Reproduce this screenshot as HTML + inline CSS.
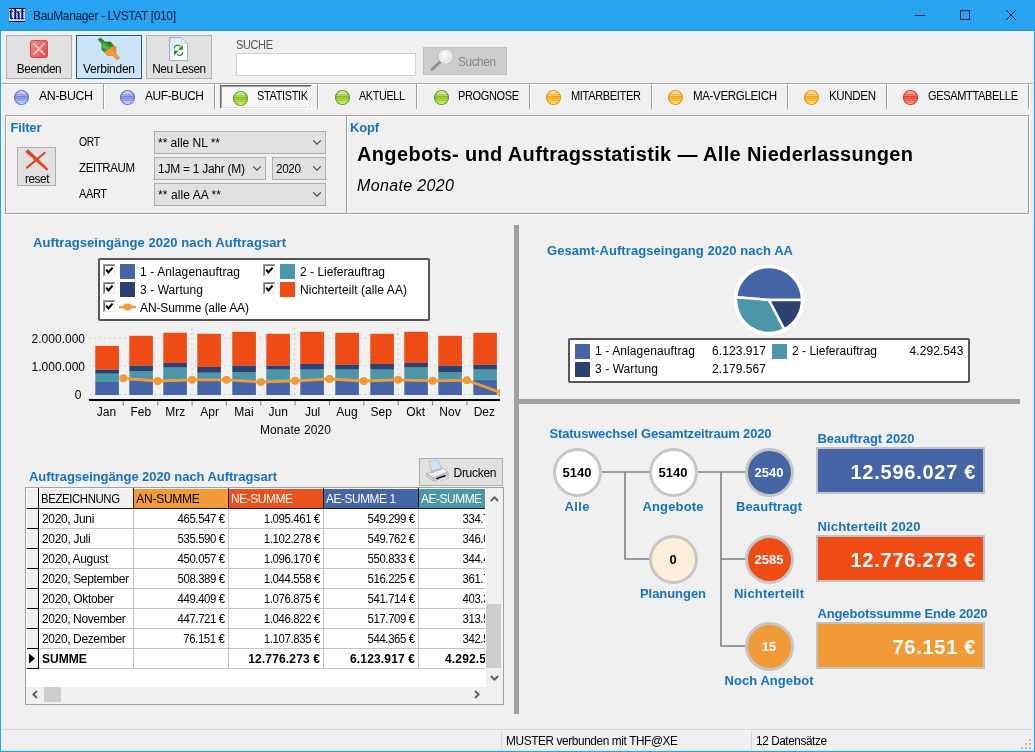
<!DOCTYPE html>
<html lang="de"><head><meta charset="utf-8"><title>BauManager - LVSTAT [010]</title>
<style>
html,body{margin:0;padding:0}
body{width:1035px;height:752px;overflow:hidden;background:#f0f0f0;position:relative;font-family:"Liberation Sans",sans-serif;font-size:12px;color:#000}
body div,body svg,body span.t{position:absolute}
span.t{white-space:nowrap;line-height:1.117}
</style></head><body>
<div id="win" style="left:0;top:0;width:1035px;height:752px;will-change:transform">
<div style="left:0px;top:0px;width:1035px;height:31px;background:#27a3f1"></div><div style="left:0px;top:30px;width:1035px;height:1px;background:#3a8fc6"></div><div style="left:0px;top:31px;width:1035px;height:1px;background:#dcfbff"></div><div style="left:0px;top:32px;width:1035px;height:1px;background:#eaf4fa"></div><div style="left:9px;top:8px;width:16px;height:14px;background:repeating-conic-gradient(#fff 0 25%,#8ed0f8 0 50%) 0 0/2px 2px;border-top:1px solid #000;border-bottom:1px solid #000;box-sizing:border-box;overflow:hidden"><span style="position:absolute;left:0.2px;top:-1.6px;font:bold 17px/14px 'Liberation Serif',serif;color:#08088c;-webkit-text-stroke:0.25px #08088c;letter-spacing:0.6px;transform:scaleX(0.71);transform-origin:0 0">thf</span></div><svg style="left:905px;top:0" width="130" height="31" viewBox="0 0 130 31"><g stroke="#0a1a4a" stroke-width="1" fill="none"><path d="M10 15.5H20"/><rect x="55.5" y="10.5" width="9" height="9"/><path d="M101 10L111 20M111 10L101 20"/></g></svg><div style="left:6px;top:35px;width:66px;height:44px;background:#e1e1e1;border:1px solid #adadad;box-sizing:border-box"></div><div style="left:76px;top:35px;width:66px;height:44px;background:#cce4f7;border:1px solid #1b5a8c;box-sizing:border-box"></div><div style="left:146px;top:35px;width:66px;height:44px;background:#e1e1e1;border:1px solid #adadad;box-sizing:border-box"></div><svg style="left:29px;top:39px" width="20" height="20" viewBox="0 0 20 20"><defs><linearGradient id="rg" x1="0" y1="0" x2="1" y2="1"><stop offset="0" stop-color="#f38c8c"/><stop offset="0.55" stop-color="#ee6666"/><stop offset="1" stop-color="#e44646"/></linearGradient></defs><rect x="0.6" y="0.6" width="18.8" height="18.8" rx="2.6" fill="#fbd0d0"/><rect x="1.5" y="1.5" width="17" height="17" rx="2" fill="url(#rg)" stroke="#c84444" stroke-width="0.9"/><path d="M4.8 4.8L15.2 15.2M15.2 4.8L4.8 15.2" stroke="#ffe9e9" stroke-opacity="0.9" stroke-width="1.5" stroke-linecap="round"/></svg><svg style="left:97px;top:37px" width="26" height="26" viewBox="0 0 26 26"><defs><linearGradient id="gg" x1="0.2" y1="0.9" x2="0.8" y2="0.1"><stop offset="0" stop-color="#1d6f1d"/><stop offset="0.35" stop-color="#58c24e"/><stop offset="0.6" stop-color="#2a8f2a"/><stop offset="1" stop-color="#176a17"/></linearGradient><linearGradient id="og" x1="0.2" y1="0.9" x2="0.8" y2="0.1"><stop offset="0" stop-color="#ef8a2a"/><stop offset="0.5" stop-color="#f9a140"/><stop offset="1" stop-color="#dd7a1c"/></linearGradient></defs><path d="M1.1 2.6L3.5 1L7.9 5H13.6L16.7 8.7L7.5 14.9L5.1 13.1L4.8 6.7Z" fill="url(#gg)" stroke="#166016" stroke-width="0.6" stroke-linejoin="round"/><path d="M16.7 8.7L18.9 10V17L22.8 21L19.75 22.75L15.8 18.6L10.5 18.4L7.5 14.9Z" fill="url(#og)" stroke="#d8741a" stroke-width="0.6" stroke-linejoin="round"/></svg><svg style="left:169px;top:37px" width="20" height="25" viewBox="0 0 20 25"><defs><linearGradient id="pg" x1="0" y1="0" x2="0.7" y2="0.6"><stop offset="0" stop-color="#cfe0f5"/><stop offset="1" stop-color="#ffffff"/></linearGradient></defs><path d="M0.5 0.5H12.5L18.5 6.3V23.5H0.5Z" fill="url(#pg)" stroke="#9aa0b6" stroke-width="0.85"/><path d="M12.5 0.5V6.3H18.5Z" fill="#eef3fa" stroke="#b4bacb" stroke-width="0.7"/><g fill="#168816"><path d="M13.8 7.9V12.7H9.2Z"/><path d="M5 13.8V18.6L9.6 13.8Z"/></g><g fill="none" stroke="#168816" stroke-width="1.2"><path d="M5.4 11.6C5.4 8 9.5 6.9 11.2 9.6"/><path d="M13.7 15C13.7 18.6 9.8 19.6 8 17"/></g></svg><div style="left:236px;top:53px;width:180px;height:23px;background:#fff;border:1px solid #d0d0d0;box-sizing:border-box"></div><div style="left:423px;top:47px;width:84px;height:28px;background:#cccccc;border:1px solid #bfbfbf;box-sizing:border-box"></div><svg style="left:428px;top:47px" width="28" height="27" viewBox="0 0 28 27"><defs><radialGradient id="mg" cx="0.4" cy="0.35" r="0.7"><stop offset="0" stop-color="#ffffff"/><stop offset="1" stop-color="#dcdcdc"/></radialGradient></defs><path d="M12.5 14.5L4 22.5" stroke="#8d8d8d" stroke-width="2.6" stroke-linecap="round"/><circle cx="17.7" cy="9.6" r="6.6" fill="url(#mg)" stroke="#ececec" stroke-width="1.6"/><circle cx="17.7" cy="9.6" r="7.5" fill="none" stroke="#b2b2b2" stroke-width="0.6"/></svg><div style="left:1px;top:83px;width:1033px;height:1px;background:#a5a5a5"></div><div style="left:1px;top:84px;width:1033px;height:1px;background:#fff"></div><div style="left:220px;top:85px;width:92px;height:24px;box-sizing:border-box;background:repeating-conic-gradient(#fff 0 25%,#f0f0f0 0 50%) 0 0/2px 2px;border-top:1px solid #696969;border-left:1px solid #696969;border-right:1px solid #fff;border-bottom:1px solid #fff"><div style="left:0;top:0;right:0;bottom:0;border-top:1px solid #a0a0a0;border-left:1px solid #a0a0a0;border-right:1px solid #e3e3e3;border-bottom:1px solid #e3e3e3"></div></div><div style="left:103px;top:84px;width:1px;height:25px;background:#a0a0a0"></div><div style="left:104px;top:85px;width:1px;height:24px;background:#fff"></div><div style="left:214px;top:84px;width:1px;height:25px;background:#a0a0a0"></div><div style="left:215px;top:85px;width:1px;height:24px;background:#fff"></div><div style="left:317px;top:84px;width:1px;height:25px;background:#a0a0a0"></div><div style="left:318px;top:85px;width:1px;height:24px;background:#fff"></div><div style="left:416px;top:84px;width:1px;height:25px;background:#a0a0a0"></div><div style="left:417px;top:85px;width:1px;height:24px;background:#fff"></div><div style="left:529px;top:84px;width:1px;height:25px;background:#a0a0a0"></div><div style="left:530px;top:85px;width:1px;height:24px;background:#fff"></div><div style="left:651px;top:84px;width:1px;height:25px;background:#a0a0a0"></div><div style="left:652px;top:85px;width:1px;height:24px;background:#fff"></div><div style="left:787px;top:84px;width:1px;height:25px;background:#a0a0a0"></div><div style="left:788px;top:85px;width:1px;height:24px;background:#fff"></div><div style="left:886px;top:84px;width:1px;height:25px;background:#a0a0a0"></div><div style="left:887px;top:85px;width:1px;height:24px;background:#fff"></div><div style="left:1028px;top:84px;width:1px;height:25px;background:#a0a0a0"></div><div style="left:1029px;top:85px;width:1px;height:24px;background:#fff"></div><svg width="0" height="0" style="left:0;top:0"><defs><linearGradient id="lb" x1="0" y1="0" x2="0" y2="1"><stop offset="0.08" stop-color="#dcd6fb"/><stop offset="0.45" stop-color="#7686e4"/><stop offset="0.7" stop-color="#8ea4f0"/><stop offset="0.97" stop-color="#c8f3ff"/></linearGradient><linearGradient id="lg" x1="0" y1="0" x2="0" y2="1"><stop offset="0.08" stop-color="#e2f2c0"/><stop offset="0.45" stop-color="#86c416"/><stop offset="0.7" stop-color="#a4da28"/><stop offset="0.97" stop-color="#e6fb80"/></linearGradient><linearGradient id="ly" x1="0" y1="0" x2="0" y2="1"><stop offset="0.08" stop-color="#ffe9a8"/><stop offset="0.45" stop-color="#fba616"/><stop offset="0.7" stop-color="#ffc02a"/><stop offset="0.97" stop-color="#fff27a"/></linearGradient><linearGradient id="lr" x1="0" y1="0" x2="0" y2="1"><stop offset="0.08" stop-color="#ffc0b0"/><stop offset="0.45" stop-color="#f03e2c"/><stop offset="0.7" stop-color="#fb5e48"/><stop offset="0.97" stop-color="#ffa88c"/></linearGradient><pattern id="stp" width="2" height="2" patternUnits="userSpaceOnUse"><rect width="2" height="1" fill="#fff" fill-opacity="0.16"/><rect y="1" width="2" height="1" fill="#000" fill-opacity="0.05"/></pattern></defs></svg><svg style="left:13px;top:88.5px" width="17" height="17" viewBox="0 0 17 17"><circle cx="8.5" cy="8.5" r="7" fill="url(#lb)" stroke="#5f6ed0" stroke-width="1.1"/><circle cx="8.5" cy="8.5" r="6.4" fill="url(#stp)"/></svg><svg style="left:119px;top:88.5px" width="17" height="17" viewBox="0 0 17 17"><circle cx="8.5" cy="8.5" r="7" fill="url(#lb)" stroke="#5f6ed0" stroke-width="1.1"/><circle cx="8.5" cy="8.5" r="6.4" fill="url(#stp)"/></svg><svg style="left:231.5px;top:89.5px" width="17" height="17" viewBox="0 0 17 17"><circle cx="8.5" cy="8.5" r="7" fill="url(#lg)" stroke="#5d9c1a" stroke-width="1.1"/><circle cx="8.5" cy="8.5" r="6.4" fill="url(#stp)"/></svg><svg style="left:334px;top:88.5px" width="17" height="17" viewBox="0 0 17 17"><circle cx="8.5" cy="8.5" r="7" fill="url(#lg)" stroke="#5d9c1a" stroke-width="1.1"/><circle cx="8.5" cy="8.5" r="6.4" fill="url(#stp)"/></svg><svg style="left:433px;top:88.5px" width="17" height="17" viewBox="0 0 17 17"><circle cx="8.5" cy="8.5" r="7" fill="url(#lg)" stroke="#5d9c1a" stroke-width="1.1"/><circle cx="8.5" cy="8.5" r="6.4" fill="url(#stp)"/></svg><svg style="left:545px;top:88.5px" width="17" height="17" viewBox="0 0 17 17"><circle cx="8.5" cy="8.5" r="7" fill="url(#ly)" stroke="#e89010" stroke-width="1.1"/><circle cx="8.5" cy="8.5" r="6.4" fill="url(#stp)"/></svg><svg style="left:667px;top:88.5px" width="17" height="17" viewBox="0 0 17 17"><circle cx="8.5" cy="8.5" r="7" fill="url(#ly)" stroke="#e89010" stroke-width="1.1"/><circle cx="8.5" cy="8.5" r="6.4" fill="url(#stp)"/></svg><svg style="left:803px;top:88.5px" width="17" height="17" viewBox="0 0 17 17"><circle cx="8.5" cy="8.5" r="7" fill="url(#ly)" stroke="#e89010" stroke-width="1.1"/><circle cx="8.5" cy="8.5" r="6.4" fill="url(#stp)"/></svg><svg style="left:902px;top:88.5px" width="17" height="17" viewBox="0 0 17 17"><circle cx="8.5" cy="8.5" r="7" fill="url(#lr)" stroke="#d03024" stroke-width="1.1"/><circle cx="8.5" cy="8.5" r="6.4" fill="url(#stp)"/></svg><div style="left:5px;top:115px;width:1024px;height:99px;box-sizing:border-box;border:1px solid #a0a0a0;box-shadow:1px 1px 0 #fff, inset 1px 1px 0 #fff"></div><div style="left:346px;top:116px;width:1px;height:97px;background:#a0a0a0"></div><div style="left:347px;top:116px;width:1px;height:97px;background:#fff"></div><div style="left:17px;top:147px;width:39px;height:39px;background:#e1e1e1;border:1px solid #adadad;box-sizing:border-box"></div><svg style="left:25px;top:149px" width="25" height="23" viewBox="0 0 25 23"><path d="M1 2.8L3 0.8L22.7 20.1L21.9 21Z" fill="#e2471b" stroke="#e2471b" stroke-width="1.1" stroke-linejoin="round"/><path d="M2 18.6L19.8 3.8" stroke="#e2471b" stroke-width="2.1" stroke-linecap="round"/></svg><div style="left:154px;top:131px;width:172px;height:23px;background:#e1e1e1;border:1px solid #adadad;box-sizing:border-box"></div><svg style="left:312px;top:139px" width="10" height="7" viewBox="0 0 10 7"><path d="M1.2 1.4L5 5.2L8.8 1.4" fill="none" stroke="#444" stroke-width="1.1"/></svg><div style="left:154px;top:157px;width:112px;height:23px;background:#e1e1e1;border:1px solid #adadad;box-sizing:border-box"></div><svg style="left:252px;top:165px" width="10" height="7" viewBox="0 0 10 7"><path d="M1.2 1.4L5 5.2L8.8 1.4" fill="none" stroke="#444" stroke-width="1.1"/></svg><div style="left:272px;top:157px;width:54px;height:23px;background:#e1e1e1;border:1px solid #adadad;box-sizing:border-box"></div><svg style="left:312px;top:165px" width="10" height="7" viewBox="0 0 10 7"><path d="M1.2 1.4L5 5.2L8.8 1.4" fill="none" stroke="#444" stroke-width="1.1"/></svg><div style="left:154px;top:183px;width:172px;height:23px;background:#e1e1e1;border:1px solid #adadad;box-sizing:border-box"></div><svg style="left:312px;top:191px" width="10" height="7" viewBox="0 0 10 7"><path d="M1.2 1.4L5 5.2L8.8 1.4" fill="none" stroke="#444" stroke-width="1.1"/></svg><div style="left:514px;top:225px;width:5px;height:489px;background:#a0a0a0"></div><div style="left:519px;top:399px;width:501px;height:5px;background:#a0a0a0"></div><div style="left:98px;top:258px;width:332px;height:63px;background:#fff;border:2px solid #555;border-radius:2px;box-sizing:border-box"></div><svg style="left:103px;top:264px" width="12" height="12" viewBox="0 0 12 12"><rect x="0" y="0" width="12" height="12" fill="#fff"/><path d="M0.5 12V0.5H12" fill="none" stroke="#9a9a9a"/><path d="M1.5 11V1.5H11" fill="none" stroke="#6e6e6e"/><path d="M11.5 1V11.5H1" fill="none" stroke="#e6e6e6"/><path d="M3.2 5.7L5.4 8.4L9.6 3.6" fill="none" stroke="#000" stroke-width="2.1"/></svg><div style="left:120px;top:264px;width:15px;height:15px;background:#4565a6"></div><svg style="left:263px;top:264px" width="12" height="12" viewBox="0 0 12 12"><rect x="0" y="0" width="12" height="12" fill="#fff"/><path d="M0.5 12V0.5H12" fill="none" stroke="#9a9a9a"/><path d="M1.5 11V1.5H11" fill="none" stroke="#6e6e6e"/><path d="M11.5 1V11.5H1" fill="none" stroke="#e6e6e6"/><path d="M3.2 5.7L5.4 8.4L9.6 3.6" fill="none" stroke="#000" stroke-width="2.1"/></svg><div style="left:280px;top:264px;width:15px;height:15px;background:#4b97a9"></div><svg style="left:103px;top:282px" width="12" height="12" viewBox="0 0 12 12"><rect x="0" y="0" width="12" height="12" fill="#fff"/><path d="M0.5 12V0.5H12" fill="none" stroke="#9a9a9a"/><path d="M1.5 11V1.5H11" fill="none" stroke="#6e6e6e"/><path d="M11.5 1V11.5H1" fill="none" stroke="#e6e6e6"/><path d="M3.2 5.7L5.4 8.4L9.6 3.6" fill="none" stroke="#000" stroke-width="2.1"/></svg><div style="left:120px;top:282px;width:15px;height:15px;background:#2c4172"></div><svg style="left:263px;top:282px" width="12" height="12" viewBox="0 0 12 12"><rect x="0" y="0" width="12" height="12" fill="#fff"/><path d="M0.5 12V0.5H12" fill="none" stroke="#9a9a9a"/><path d="M1.5 11V1.5H11" fill="none" stroke="#6e6e6e"/><path d="M11.5 1V11.5H1" fill="none" stroke="#e6e6e6"/><path d="M3.2 5.7L5.4 8.4L9.6 3.6" fill="none" stroke="#000" stroke-width="2.1"/></svg><div style="left:280px;top:282px;width:15px;height:15px;background:#ef4b15"></div><svg style="left:103px;top:300px" width="12" height="12" viewBox="0 0 12 12"><rect x="0" y="0" width="12" height="12" fill="#fff"/><path d="M0.5 12V0.5H12" fill="none" stroke="#9a9a9a"/><path d="M1.5 11V1.5H11" fill="none" stroke="#6e6e6e"/><path d="M11.5 1V11.5H1" fill="none" stroke="#e6e6e6"/><path d="M3.2 5.7L5.4 8.4L9.6 3.6" fill="none" stroke="#000" stroke-width="2.1"/></svg><svg style="left:118px;top:302px" width="20" height="10" viewBox="0 0 20 10"><path d="M1 5H18" stroke="#f19b38" stroke-width="2.5"/><ellipse cx="9.5" cy="5" rx="4.2" ry="3.4" fill="#f19b38"/></svg><svg style="left:0;top:320px" width="520" height="125" viewBox="0 320 520 125"><path d="M89 338H500" stroke="#d2d2d2" stroke-width="1.2" stroke-dasharray="2 3"/><path d="M89 366H500" stroke="#d2d2d2" stroke-width="1.2" stroke-dasharray="2 3"/><path d="M89 394.5H500" stroke="#d2d2d2" stroke-width="1.2" stroke-dasharray="2 3"/><path d="M192 328V399" stroke="#d2d2d2" stroke-width="1.2" stroke-dasharray="2 3"/><path d="M294.5 328V399" stroke="#d2d2d2" stroke-width="1.2" stroke-dasharray="2 3"/><path d="M398 328V399" stroke="#d2d2d2" stroke-width="1.2" stroke-dasharray="2 3"/><rect x="95.3" y="345.9" width="23.6" height="23.8" fill="#ef4b15"/><rect x="95.3" y="369.7" width="23.6" height="4.1" fill="#2c4172"/><rect x="95.3" y="373.8" width="23.6" height="8.2" fill="#4b97a9"/><rect x="95.3" y="382" width="23.6" height="13.0" fill="#4565a6"/><rect x="129.3" y="335.8" width="23.6" height="29.9" fill="#ef4b15"/><rect x="129.3" y="365.7" width="23.6" height="5.3" fill="#2c4172"/><rect x="129.3" y="371" width="23.6" height="10.0" fill="#4b97a9"/><rect x="129.3" y="381" width="23.6" height="14.0" fill="#4565a6"/><rect x="163.3" y="332.8" width="23.6" height="30.2" fill="#ef4b15"/><rect x="163.3" y="363" width="23.6" height="4.7" fill="#2c4172"/><rect x="163.3" y="367.7" width="23.6" height="12.8" fill="#4b97a9"/><rect x="163.3" y="380.5" width="23.6" height="14.5" fill="#4565a6"/><rect x="197.3" y="333.8" width="23.6" height="33.2" fill="#ef4b15"/><rect x="197.3" y="367" width="23.6" height="5.8" fill="#2c4172"/><rect x="197.3" y="372.8" width="23.6" height="8.2" fill="#4b97a9"/><rect x="197.3" y="381" width="23.6" height="14.0" fill="#4565a6"/><rect x="232.3" y="331.8" width="23.6" height="33.9" fill="#ef4b15"/><rect x="232.3" y="365.7" width="23.6" height="6.3" fill="#2c4172"/><rect x="232.3" y="372" width="23.6" height="8.0" fill="#4b97a9"/><rect x="232.3" y="380" width="23.6" height="15.0" fill="#4565a6"/><rect x="266.3" y="333.8" width="23.6" height="31.9" fill="#ef4b15"/><rect x="266.3" y="365.7" width="23.6" height="4.0" fill="#2c4172"/><rect x="266.3" y="369.7" width="23.6" height="9.9" fill="#4b97a9"/><rect x="266.3" y="379.6" width="23.6" height="15.4" fill="#4565a6"/><rect x="300.3" y="331.8" width="23.6" height="32.2" fill="#ef4b15"/><rect x="300.3" y="364" width="23.6" height="5.7" fill="#2c4172"/><rect x="300.3" y="369.7" width="23.6" height="9.9" fill="#4b97a9"/><rect x="300.3" y="379.6" width="23.6" height="15.4" fill="#4565a6"/><rect x="335.3" y="332.8" width="23.6" height="31.9" fill="#ef4b15"/><rect x="335.3" y="364.7" width="23.6" height="5.0" fill="#2c4172"/><rect x="335.3" y="369.7" width="23.6" height="9.9" fill="#4b97a9"/><rect x="335.3" y="379.6" width="23.6" height="15.4" fill="#4565a6"/><rect x="370.3" y="333.8" width="23.6" height="30.2" fill="#ef4b15"/><rect x="370.3" y="364" width="23.6" height="5.7" fill="#2c4172"/><rect x="370.3" y="369.7" width="23.6" height="10.8" fill="#4b97a9"/><rect x="370.3" y="380.5" width="23.6" height="14.5" fill="#4565a6"/><rect x="404.3" y="331.8" width="23.6" height="31.2" fill="#ef4b15"/><rect x="404.3" y="363" width="23.6" height="4.7" fill="#2c4172"/><rect x="404.3" y="367.7" width="23.6" height="12.1" fill="#4b97a9"/><rect x="404.3" y="379.8" width="23.6" height="15.2" fill="#4565a6"/><rect x="438.3" y="335.8" width="23.6" height="29.9" fill="#ef4b15"/><rect x="438.3" y="365.7" width="23.6" height="6.3" fill="#2c4172"/><rect x="438.3" y="372" width="23.6" height="8.5" fill="#4b97a9"/><rect x="438.3" y="380.5" width="23.6" height="14.5" fill="#4565a6"/><rect x="473.3" y="332.8" width="23.6" height="31.9" fill="#ef4b15"/><rect x="473.3" y="364.7" width="23.6" height="5.0" fill="#2c4172"/><rect x="473.3" y="369.7" width="23.6" height="10.1" fill="#4b97a9"/><rect x="473.3" y="379.8" width="23.6" height="15.2" fill="#4565a6"/><clipPath id="cc"><rect x="85" y="320" width="415" height="85"/></clipPath><g clip-path="url(#cc)"><polyline points="123.3,378.3 157.7,381 192.1,379.8 226.4,379.8 260.8,382 295.1,380.8 329.5,379 363.8,381 398.2,379.8 432.5,380.8 466.9,380.3 501.2,392.6" fill="none" stroke="#f19b38" stroke-width="2.8" stroke-linejoin="round"/><circle cx="123.3" cy="378.3" r="4" fill="#f19b38"/><circle cx="157.7" cy="381" r="4" fill="#f19b38"/><circle cx="192.1" cy="379.8" r="4" fill="#f19b38"/><circle cx="226.4" cy="379.8" r="4" fill="#f19b38"/><circle cx="260.8" cy="382" r="4" fill="#f19b38"/><circle cx="295.1" cy="380.8" r="4" fill="#f19b38"/><circle cx="329.5" cy="379" r="4" fill="#f19b38"/><circle cx="363.8" cy="381" r="4" fill="#f19b38"/><circle cx="398.2" cy="379.8" r="4" fill="#f19b38"/><circle cx="432.5" cy="380.8" r="4" fill="#f19b38"/><circle cx="466.9" cy="380.3" r="4" fill="#f19b38"/><circle cx="501.2" cy="392.6" r="4" fill="#f19b38"/></g><path d="M89 400H500" stroke="#000" stroke-width="2"/><path d="M123.3 401V405.5" stroke="#8c8c8c" stroke-width="1.2"/><path d="M157.7 401V405.5" stroke="#8c8c8c" stroke-width="1.2"/><path d="M192.1 401V405.5" stroke="#8c8c8c" stroke-width="1.2"/><path d="M226.4 401V405.5" stroke="#8c8c8c" stroke-width="1.2"/><path d="M260.8 401V405.5" stroke="#8c8c8c" stroke-width="1.2"/><path d="M295.1 401V405.5" stroke="#8c8c8c" stroke-width="1.2"/><path d="M329.5 401V405.5" stroke="#8c8c8c" stroke-width="1.2"/><path d="M363.8 401V405.5" stroke="#8c8c8c" stroke-width="1.2"/><path d="M398.2 401V405.5" stroke="#8c8c8c" stroke-width="1.2"/><path d="M432.5 401V405.5" stroke="#8c8c8c" stroke-width="1.2"/><path d="M466.9 401V405.5" stroke="#8c8c8c" stroke-width="1.2"/></svg><div style="left:419px;top:458px;width:84px;height:28px;background:#e1e1e1;border:1px solid #adadad;box-sizing:border-box"></div><svg style="left:424px;top:459px" width="27" height="25" viewBox="0 0 27 25"><path d="M4.8 2.4L14 1.3L17.6 9.8L8 12.1Z" fill="#cfe3f9" stroke="#9bb6d6" stroke-width="0.7"/><path d="M2.5 14.4L18.5 8.9L24 13L9.4 19Z" fill="#f0f0f0" stroke="#a8a8a8" stroke-width="0.7"/><path d="M7 13.6L17.8 10" stroke="#b5b5b5" stroke-width="1.2"/><path d="M2.5 14.4L9.4 19L9.8 22.2L3.4 18Z" fill="#d9d9d9" stroke="#a0a0a0" stroke-width="0.6"/><path d="M9.4 19L24 13L24.2 16.7L9.8 22.2Z" fill="#d0d0d0" stroke="#a0a0a0" stroke-width="0.6"/><path d="M12.1 19L21.3 15.7L21.8 17.3L12.6 20.6Z" fill="#111"/><path d="M11.7 21.6L23.1 17.6L25 18.5L14 22.8Z" fill="#f6f6f6" stroke="#b8b8b8" stroke-width="0.6"/></svg><div style="left:25px;top:487px;width:479px;height:218px;background:#fff;border:1px solid #a0a0a0;box-sizing:border-box"></div><div style="left:27px;top:489px;width:11px;height:179px;background:#f0f0f0"></div><div style="left:27px;top:508px;width:11px;height:1px;background:#000"></div><div style="left:27px;top:528px;width:11px;height:1px;background:#000"></div><div style="left:27px;top:548px;width:11px;height:1px;background:#000"></div><div style="left:27px;top:568px;width:11px;height:1px;background:#000"></div><div style="left:27px;top:588px;width:11px;height:1px;background:#000"></div><div style="left:27px;top:608px;width:11px;height:1px;background:#000"></div><div style="left:27px;top:628px;width:11px;height:1px;background:#000"></div><div style="left:27px;top:648px;width:11px;height:1px;background:#000"></div><div style="left:27px;top:668px;width:11px;height:1px;background:#000"></div><div style="left:38px;top:488px;width:1px;height:181px;background:#000"></div><div style="left:39px;top:489px;width:94px;height:19px;background:#f0f0f0"></div><div style="left:133px;top:488px;width:1px;height:21px;background:#1a1a1a"></div><div style="left:134px;top:489px;width:94px;height:19px;background:#f19b38"></div><div style="left:228px;top:488px;width:1px;height:21px;background:#1a1a1a"></div><div style="left:229px;top:489px;width:94px;height:19px;background:#e9511d"></div><div style="left:323px;top:488px;width:1px;height:21px;background:#1a1a1a"></div><div style="left:324px;top:489px;width:94px;height:19px;background:#4565a6"></div><div style="left:418px;top:488px;width:1px;height:21px;background:#1a1a1a"></div><div style="left:419px;top:489px;width:66px;height:19px;background:#4b97a9"></div><div style="left:39px;top:508px;width:446px;height:1px;background:#1a1a1a"></div><div style="left:39px;top:528px;width:446px;height:1px;background:#c3c3c3"></div><div style="left:39px;top:548px;width:446px;height:1px;background:#c3c3c3"></div><div style="left:39px;top:568px;width:446px;height:1px;background:#c3c3c3"></div><div style="left:39px;top:588px;width:446px;height:1px;background:#c3c3c3"></div><div style="left:39px;top:608px;width:446px;height:1px;background:#c3c3c3"></div><div style="left:39px;top:628px;width:446px;height:1px;background:#c3c3c3"></div><div style="left:39px;top:648px;width:446px;height:1px;background:#c3c3c3"></div><div style="left:39px;top:668px;width:446px;height:1px;background:#c3c3c3"></div><div style="left:133px;top:509px;width:1px;height:160px;background:#c3c3c3"></div><div style="left:228px;top:509px;width:1px;height:160px;background:#c3c3c3"></div><div style="left:323px;top:509px;width:1px;height:160px;background:#c3c3c3"></div><div style="left:418px;top:509px;width:1px;height:160px;background:#c3c3c3"></div><svg style="left:28px;top:653px" width="8" height="11" viewBox="0 0 8 11"><path d="M1 0.5L7 5.5L1 10.5Z" fill="#000"/></svg><div style="left:486px;top:488px;width:17px;height:199px;background:#f0f0f0"></div><div style="left:486px;top:604px;width:15px;height:64px;background:#cdcdcd"></div><svg style="left:486px;top:488px" width="17" height="199" viewBox="0 0 17 199"><path d="M4.8 13L8.5 9.3L12.2 13M4.8 188L8.5 191.7L12.2 188" fill="none" stroke="#5a5a5a" stroke-width="1.8"/></svg><div style="left:26px;top:687px;width:460px;height:17px;background:#f0f0f0"></div><div style="left:44px;top:687px;width:17px;height:15px;background:#cdcdcd"></div><svg style="left:26px;top:687px" width="460" height="17" viewBox="0 0 460 17"><path d="M11 3.8L7.3 7.5L11 11.2M449 3.8L452.7 7.5L449 11.2" fill="none" stroke="#5a5a5a" stroke-width="1.8"/></svg><div style="left:486px;top:687px;width:17px;height:17px;background:#f0f0f0"></div><svg style="left:729px;top:260px" width="80" height="80" viewBox="729 260 80 80"><circle cx="769" cy="300" r="35" fill="#fff"/><path d="M769 300L802.00 300.00A33 33 0 0 0 736.12 297.14Z" fill="#4565a6" stroke="#fff" stroke-width="2.5" stroke-linejoin="round"/><path d="M769 300L736.12 297.14A33 33 0 0 0 784.34 329.22Z" fill="#4b97a9" stroke="#fff" stroke-width="2.5" stroke-linejoin="round"/><path d="M769 300L784.34 329.22A33 33 0 0 0 802.00 300.00Z" fill="#2c4172" stroke="#fff" stroke-width="2.5" stroke-linejoin="round"/><circle cx="769" cy="300" r="34" fill="none" stroke="#fff" stroke-width="2.4"/></svg><div style="left:568px;top:338px;width:402px;height:45px;background:#fff;border:2px solid #555;border-radius:2px;box-sizing:border-box"></div><div style="left:575px;top:344px;width:15px;height:15px;background:#4565a6"></div><div style="left:575px;top:362px;width:15px;height:15px;background:#2c4172"></div><div style="left:772px;top:344px;width:15px;height:15px;background:#4b97a9"></div><svg style="left:540px;top:440px" width="270" height="240" viewBox="540 440 270 240"><g fill="none" stroke="#7f7f7f" stroke-width="1.6"><path d="M600 472H650M696 472H746M625 472V559H650M721 472V646H746M721 559H746"/></g></svg><div style="left:552.5px;top:447.5px;width:49px;height:49px;box-sizing:border-box;border-radius:50%;background:#fff;border:3px solid #c6c6c6"></div><div style="left:648.5px;top:447.5px;width:49px;height:49px;box-sizing:border-box;border-radius:50%;background:#fff;border:3px solid #c6c6c6"></div><div style="left:744.5px;top:447.5px;width:49px;height:49px;box-sizing:border-box;border-radius:50%;background:#4565a6;border:3px solid #c6c6c6"></div><div style="left:648.5px;top:534.5px;width:49px;height:49px;box-sizing:border-box;border-radius:50%;background:#fdeed9;border:3px solid #c6c6c6"></div><div style="left:744.5px;top:534.5px;width:49px;height:49px;box-sizing:border-box;border-radius:50%;background:#ef4b15;border:3px solid #c6c6c6"></div><div style="left:744.5px;top:621.5px;width:49px;height:49px;box-sizing:border-box;border-radius:50%;background:#f19b38;border:3px solid #c6c6c6"></div><div style="left:816px;top:447px;width:169px;height:47.4px;background:#4565a6;border:2px solid #c2c2c2;box-sizing:border-box"></div><div style="left:816px;top:535px;width:169px;height:47.4px;background:#ef4b15;border:2px solid #c2c2c2;box-sizing:border-box"></div><div style="left:816px;top:622px;width:169px;height:47.4px;background:#f19b38;border:2px solid #c2c2c2;box-sizing:border-box"></div><div style="left:1px;top:729px;width:1033px;height:1px;background:#d7d7d7"></div><div style="left:501px;top:731px;width:1px;height:20px;background:#d7d7d7"></div><div style="left:751px;top:731px;width:1px;height:20px;background:#d7d7d7"></div><svg style="left:1020px;top:738px" width="13" height="13" viewBox="0 0 13 13"><g fill="#bdbdbd"><rect x="9" y="1" width="2" height="2"/><rect x="5" y="5" width="2" height="2"/><rect x="9" y="5" width="2" height="2"/><rect x="1" y="9" width="2" height="2"/><rect x="5" y="9" width="2" height="2"/><rect x="9" y="9" width="2" height="2"/></g></svg><div style="left:0px;top:31px;width:1px;height:721px;background:#27a3f1"></div><div style="left:1034px;top:31px;width:1px;height:721px;background:#27a3f1"></div><div style="left:0px;top:751px;width:1035px;height:1px;background:#27a3f1"></div><div style="left:1px;top:750px;width:1033px;height:1px;background:#cdeaf8"></div><div style="left:1033px;top:32px;width:1px;height:718px;background:#dbeefa"></div><div style="left:1px;top:32px;width:1px;height:718px;background:#e6f5fc"></div>
<span class="t" style="font-size:12px;color:#0a1a33;letter-spacing:-0.369px;top:10.10px;left:33px;">BauManager - LVSTAT [010]</span>
<span class="t" style="font-size:12px;color:#000;letter-spacing:-0.400px;top:63.10px;left:38.80px;transform:translateX(-50%) scaleX(0.9858);">Beenden</span>
<span class="t" style="font-size:12px;color:#000;letter-spacing:-0.256px;top:63.10px;left:108.87px;transform:translateX(-50%);">Verbinden</span>
<span class="t" style="font-size:12px;color:#000;letter-spacing:-0.400px;top:63.10px;left:179.30px;transform:translateX(-50%) scaleX(0.9846);">Neu Lesen</span>
<span class="t" style="font-size:12px;color:#555;letter-spacing:-0.400px;top:38.60px;left:236px;transform:scaleX(0.9155);transform-origin:0 0;">SUCHE</span>
<span class="t" style="font-size:12px;color:#858585;letter-spacing:-0.400px;top:56.10px;left:457.5px;transform:scaleX(0.9818);transform-origin:0 0;">Suchen</span>
<span class="t" style="font-size:12.5px;color:#000;letter-spacing:-0.400px;top:89.81px;left:39px;transform:scaleX(0.9899);transform-origin:0 0;">AN-BUCH</span>
<span class="t" style="font-size:12.5px;color:#000;letter-spacing:-0.400px;top:89.81px;left:145px;transform:scaleX(0.9548);transform-origin:0 0;">AUF-BUCH</span>
<span class="t" style="font-size:12.5px;color:#000;letter-spacing:-0.400px;top:89.81px;left:257px;transform:scaleX(0.8769);transform-origin:0 0;">STATISTIK</span>
<span class="t" style="font-size:12.5px;color:#000;letter-spacing:-0.400px;top:89.81px;left:359px;transform:scaleX(0.8648);transform-origin:0 0;">AKTUELL</span>
<span class="t" style="font-size:12.5px;color:#000;letter-spacing:-0.400px;top:89.81px;left:458px;transform:scaleX(0.8783);transform-origin:0 0;">PROGNOSE</span>
<span class="t" style="font-size:12.5px;color:#000;letter-spacing:-0.400px;top:89.81px;left:571px;transform:scaleX(0.8849);transform-origin:0 0;">MITARBEITER</span>
<span class="t" style="font-size:12.5px;color:#000;letter-spacing:-0.400px;top:89.81px;left:693px;transform:scaleX(0.9256);transform-origin:0 0;">MA-VERGLEICH</span>
<span class="t" style="font-size:12.5px;color:#000;letter-spacing:-0.400px;top:89.81px;left:829px;transform:scaleX(0.9253);transform-origin:0 0;">KUNDEN</span>
<span class="t" style="font-size:12.5px;color:#000;letter-spacing:-0.400px;top:89.81px;left:928px;transform:scaleX(0.8828);transform-origin:0 0;">GESAMTTABELLE</span>
<span class="t" style="font-size:13px;color:#1773be;font-weight:bold;letter-spacing:-0.159px;top:120.53px;left:10.5px;">Filter</span>
<span class="t" style="font-size:13px;color:#1773be;font-weight:bold;letter-spacing:-0.203px;top:120.53px;left:350px;">Kopf</span>
<span class="t" style="font-size:12px;color:#000;letter-spacing:-0.400px;top:172.60px;left:37.00px;transform:translateX(-50%) scaleX(0.9766);">reset</span>
<span class="t" style="font-size:12px;color:#000;letter-spacing:-0.400px;top:136.10px;left:79px;transform:scaleX(0.8633);transform-origin:0 0;">ORT</span>
<span class="t" style="font-size:12px;color:#000;letter-spacing:-0.400px;top:162.10px;left:79px;transform:scaleX(0.9565);transform-origin:0 0;">ZEITRAUM</span>
<span class="t" style="font-size:12px;color:#000;letter-spacing:-0.400px;top:188.10px;left:79px;transform:scaleX(0.9151);transform-origin:0 0;">AART</span>
<span class="t" style="font-size:12px;color:#000;letter-spacing:-0.022px;top:136.60px;left:158px;">** alle NL **</span>
<span class="t" style="font-size:12px;color:#000;letter-spacing:-0.269px;top:162.60px;left:158px;">1JM = 1 Jahr (M)</span>
<span class="t" style="font-size:12px;color:#000;letter-spacing:-0.400px;top:162.60px;left:276px;transform:scaleX(0.9803);transform-origin:0 0;">2020</span>
<span class="t" style="font-size:12px;color:#000;letter-spacing:0.079px;top:188.60px;left:158px;">** alle AA **</span>
<span class="t" style="font-size:20px;color:#000;font-weight:bold;letter-spacing:0.349px;top:142.80px;left:357px;">Angebots- und Auftragsstatistik — Alle Niederlassungen</span>
<span class="t" style="font-size:16px;color:#000;font-style:italic;letter-spacing:0.359px;top:176.80px;left:357px;">Monate 2020</span>
<span class="t" style="font-size:13px;color:#1773be;font-weight:bold;letter-spacing:0.076px;top:236.03px;left:33px;">Auftragseingänge 2020 nach Auftragsart</span>
<span class="t" style="font-size:12px;color:#000;letter-spacing:0.113px;top:265.60px;left:140px;">1 - Anlagenauftrag</span>
<span class="t" style="font-size:12px;color:#000;letter-spacing:0.018px;top:265.60px;left:300px;">2 - Lieferauftrag</span>
<span class="t" style="font-size:12px;color:#000;letter-spacing:0.075px;top:283.60px;left:140px;">3 - Wartung</span>
<span class="t" style="font-size:12px;color:#000;letter-spacing:0.077px;top:283.60px;left:300px;">Nichterteilt (alle AA)</span>
<span class="t" style="font-size:12px;color:#000;letter-spacing:-0.100px;top:301.60px;left:140px;">AN-Summe (alle AA)</span>
<span class="t" style="font-size:12px;color:#000;top:332.90px;right:950.00px;">2.000.000</span>
<span class="t" style="font-size:12px;color:#000;top:360.70px;right:950.00px;">1.000.000</span>
<span class="t" style="font-size:12px;color:#000;top:388.70px;right:953.50px;">0</span>
<span class="t" style="font-size:12px;color:#000;top:406.10px;left:106.50px;transform:translateX(-50%);">Jan</span>
<span class="t" style="font-size:12px;color:#000;top:406.10px;left:140.85px;transform:translateX(-50%);">Feb</span>
<span class="t" style="font-size:12px;color:#000;top:406.10px;left:175.20px;transform:translateX(-50%);">Mrz</span>
<span class="t" style="font-size:12px;color:#000;top:406.10px;left:209.55px;transform:translateX(-50%);">Apr</span>
<span class="t" style="font-size:12px;color:#000;top:406.10px;left:243.90px;transform:translateX(-50%);">Mai</span>
<span class="t" style="font-size:12px;color:#000;top:406.10px;left:278.25px;transform:translateX(-50%);">Jun</span>
<span class="t" style="font-size:12px;color:#000;top:406.10px;left:312.60px;transform:translateX(-50%);">Jul</span>
<span class="t" style="font-size:12px;color:#000;top:406.10px;left:346.95px;transform:translateX(-50%);">Aug</span>
<span class="t" style="font-size:12px;color:#000;top:406.10px;left:381.30px;transform:translateX(-50%);">Sep</span>
<span class="t" style="font-size:12px;color:#000;top:406.10px;left:415.65px;transform:translateX(-50%);">Okt</span>
<span class="t" style="font-size:12px;color:#000;top:406.10px;left:450.00px;transform:translateX(-50%);">Nov</span>
<span class="t" style="font-size:12px;color:#000;top:406.10px;left:484.35px;transform:translateX(-50%);">Dez</span>
<span class="t" style="font-size:12px;color:#000;letter-spacing:0.094px;top:424.10px;left:295.55px;transform:translateX(-50%);">Monate 2020</span>
<span class="t" style="font-size:13px;color:#1773be;font-weight:bold;letter-spacing:-0.060px;top:470.02px;left:29px;">Auftragseingänge 2020 nach Auftragsart</span>
<span class="t" style="font-size:12px;color:#000;letter-spacing:-0.281px;top:466.70px;left:453.5px;">Drucken</span>
<span class="t" style="font-size:12px;color:#000;letter-spacing:-0.400px;top:492.80px;left:41.3px;transform:scaleX(0.9479);transform-origin:0 0;">BEZEICHNUNG</span>
<span class="t" style="font-size:12px;color:#000;letter-spacing:-0.263px;top:492.80px;left:136.3px;">AN-SUMME</span>
<span class="t" style="font-size:12px;color:#fff;letter-spacing:-0.400px;top:492.80px;left:231.3px;transform:scaleX(0.9913);transform-origin:0 0;">NE-SUMME</span>
<span class="t" style="font-size:12px;color:#fff;letter-spacing:-0.400px;top:492.80px;left:326.3px;transform:scaleX(0.9847);transform-origin:0 0;">AE-SUMME 1</span>
<span class="t" style="font-size:12px;color:#fff;letter-spacing:-0.400px;top:492.80px;left:421.3px;transform:scaleX(0.9859);transform-origin:0 0;">AE-SUMME</span>
<span class="t" style="font-size:12px;color:#000;letter-spacing:-0.338px;top:512.80px;left:42px;">2020, Juni</span>
<span class="t" style="font-size:12px;color:#000;letter-spacing:-0.400px;top:512.80px;right:810.38px;transform:scaleX(0.9499);transform-origin:100% 0;">465.547 €</span>
<span class="t" style="font-size:12px;color:#000;letter-spacing:-0.400px;top:512.80px;right:715.38px;transform:scaleX(0.9531);transform-origin:100% 0;">1.095.461 €</span>
<span class="t" style="font-size:12px;color:#000;letter-spacing:-0.400px;top:512.80px;right:620.38px;transform:scaleX(0.9499);transform-origin:100% 0;">549.299 €</span>
<div style="left:419px;top:512.80px;width:66px;height:16px;overflow:hidden"><span class="t" style="font-size:12px;color:#000;letter-spacing:-0.400px;top:0;right:-24.62px;transform:scaleX(0.9499);transform-origin:100% 0;">334.712 €</span></div>
<span class="t" style="font-size:12px;color:#000;letter-spacing:-0.314px;top:532.80px;left:42px;">2020, Juli</span>
<span class="t" style="font-size:12px;color:#000;letter-spacing:-0.400px;top:532.80px;right:810.38px;transform:scaleX(0.9499);transform-origin:100% 0;">535.590 €</span>
<span class="t" style="font-size:12px;color:#000;letter-spacing:-0.400px;top:532.80px;right:715.38px;transform:scaleX(0.9531);transform-origin:100% 0;">1.102.278 €</span>
<span class="t" style="font-size:12px;color:#000;letter-spacing:-0.400px;top:532.80px;right:620.38px;transform:scaleX(0.9499);transform-origin:100% 0;">549.762 €</span>
<div style="left:419px;top:532.80px;width:66px;height:16px;overflow:hidden"><span class="t" style="font-size:12px;color:#000;letter-spacing:-0.400px;top:0;right:-24.62px;transform:scaleX(0.9499);transform-origin:100% 0;">346.058 €</span></div>
<span class="t" style="font-size:12px;color:#000;letter-spacing:-0.350px;top:552.80px;left:42px;">2020, August</span>
<span class="t" style="font-size:12px;color:#000;letter-spacing:-0.400px;top:552.80px;right:810.38px;transform:scaleX(0.9499);transform-origin:100% 0;">450.057 €</span>
<span class="t" style="font-size:12px;color:#000;letter-spacing:-0.400px;top:552.80px;right:715.38px;transform:scaleX(0.9531);transform-origin:100% 0;">1.096.170 €</span>
<span class="t" style="font-size:12px;color:#000;letter-spacing:-0.400px;top:552.80px;right:620.38px;transform:scaleX(0.9499);transform-origin:100% 0;">550.833 €</span>
<div style="left:419px;top:552.80px;width:66px;height:16px;overflow:hidden"><span class="t" style="font-size:12px;color:#000;letter-spacing:-0.400px;top:0;right:-24.62px;transform:scaleX(0.9499);transform-origin:100% 0;">344.437 €</span></div>
<span class="t" style="font-size:12px;color:#000;letter-spacing:-0.362px;top:572.80px;left:42px;">2020, September</span>
<span class="t" style="font-size:12px;color:#000;letter-spacing:-0.400px;top:572.80px;right:810.38px;transform:scaleX(0.9499);transform-origin:100% 0;">508.389 €</span>
<span class="t" style="font-size:12px;color:#000;letter-spacing:-0.400px;top:572.80px;right:715.38px;transform:scaleX(0.9531);transform-origin:100% 0;">1.044.558 €</span>
<span class="t" style="font-size:12px;color:#000;letter-spacing:-0.400px;top:572.80px;right:620.38px;transform:scaleX(0.9499);transform-origin:100% 0;">516.225 €</span>
<div style="left:419px;top:572.80px;width:66px;height:16px;overflow:hidden"><span class="t" style="font-size:12px;color:#000;letter-spacing:-0.400px;top:0;right:-24.62px;transform:scaleX(0.9499);transform-origin:100% 0;">361.725 €</span></div>
<span class="t" style="font-size:12px;color:#000;letter-spacing:-0.349px;top:592.80px;left:42px;">2020, Oktober</span>
<span class="t" style="font-size:12px;color:#000;letter-spacing:-0.400px;top:592.80px;right:810.38px;transform:scaleX(0.9499);transform-origin:100% 0;">449.409 €</span>
<span class="t" style="font-size:12px;color:#000;letter-spacing:-0.400px;top:592.80px;right:715.38px;transform:scaleX(0.9531);transform-origin:100% 0;">1.076.875 €</span>
<span class="t" style="font-size:12px;color:#000;letter-spacing:-0.400px;top:592.80px;right:620.38px;transform:scaleX(0.9499);transform-origin:100% 0;">541.714 €</span>
<div style="left:419px;top:592.80px;width:66px;height:16px;overflow:hidden"><span class="t" style="font-size:12px;color:#000;letter-spacing:-0.400px;top:0;right:-24.62px;transform:scaleX(0.9499);transform-origin:100% 0;">403.351 €</span></div>
<span class="t" style="font-size:12px;color:#000;letter-spacing:-0.375px;top:612.80px;left:42px;">2020, November</span>
<span class="t" style="font-size:12px;color:#000;letter-spacing:-0.400px;top:612.80px;right:810.38px;transform:scaleX(0.9499);transform-origin:100% 0;">447.721 €</span>
<span class="t" style="font-size:12px;color:#000;letter-spacing:-0.400px;top:612.80px;right:715.38px;transform:scaleX(0.9531);transform-origin:100% 0;">1.046.822 €</span>
<span class="t" style="font-size:12px;color:#000;letter-spacing:-0.400px;top:612.80px;right:620.38px;transform:scaleX(0.9499);transform-origin:100% 0;">517.709 €</span>
<div style="left:419px;top:612.80px;width:66px;height:16px;overflow:hidden"><span class="t" style="font-size:12px;color:#000;letter-spacing:-0.400px;top:0;right:-24.62px;transform:scaleX(0.9499);transform-origin:100% 0;">313.562 €</span></div>
<span class="t" style="font-size:12px;color:#000;letter-spacing:-0.375px;top:632.80px;left:42px;">2020, Dezember</span>
<span class="t" style="font-size:12px;color:#000;letter-spacing:-0.400px;top:632.80px;right:810.38px;transform:scaleX(0.9499);transform-origin:100% 0;">76.151 €</span>
<span class="t" style="font-size:12px;color:#000;letter-spacing:-0.400px;top:632.80px;right:715.38px;transform:scaleX(0.9531);transform-origin:100% 0;">1.107.835 €</span>
<span class="t" style="font-size:12px;color:#000;letter-spacing:-0.400px;top:632.80px;right:620.38px;transform:scaleX(0.9499);transform-origin:100% 0;">544.365 €</span>
<div style="left:419px;top:632.80px;width:66px;height:16px;overflow:hidden"><span class="t" style="font-size:12px;color:#000;letter-spacing:-0.400px;top:0;right:-24.62px;transform:scaleX(0.9499);transform-origin:100% 0;">342.573 €</span></div>
<span class="t" style="font-size:12px;color:#000;font-weight:bold;top:652.80px;left:42px;">SUMME</span>
<span class="t" style="font-size:12px;color:#000;font-weight:bold;letter-spacing:0.159px;top:652.80px;right:714.84px;">12.776.273 €</span>
<span class="t" style="font-size:12px;color:#000;font-weight:bold;letter-spacing:0.159px;top:652.80px;right:619.84px;">6.123.917 €</span>
<div style="left:419px;top:652.80px;width:66px;height:16px;overflow:hidden"><span class="t" style="font-size:12px;color:#000;font-weight:bold;letter-spacing:0.159px;top:0;right:-25.16px;">4.292.543 €</span></div>
<span class="t" style="font-size:13px;color:#1773be;font-weight:bold;letter-spacing:0.068px;top:243.53px;left:547px;">Gesamt-Auftragseingang 2020 nach AA</span>
<span class="t" style="font-size:12px;color:#000;letter-spacing:0.113px;top:345.10px;left:595px;">1 - Anlagenauftrag</span>
<span class="t" style="font-size:12px;color:#000;letter-spacing:0.075px;top:363.10px;left:595px;">3 - Wartung</span>
<span class="t" style="font-size:12px;color:#000;letter-spacing:0.018px;top:345.10px;left:792px;">2 - Lieferauftrag</span>
<span class="t" style="font-size:12px;color:#000;letter-spacing:0.076px;top:345.10px;right:268.92px;">6.123.917</span>
<span class="t" style="font-size:12px;color:#000;letter-spacing:0.076px;top:363.10px;right:268.92px;">2.179.567</span>
<span class="t" style="font-size:12px;color:#000;letter-spacing:0.076px;top:345.10px;right:71.42px;">4.292.543</span>
<span class="t" style="font-size:13px;color:#1773be;font-weight:bold;letter-spacing:-0.175px;top:427.02px;left:549.5px;">Statuswechsel Gesamtzeitraum 2020</span>
<span class="t" style="font-size:13px;color:#000;font-weight:bold;top:466.02px;left:577.00px;transform:translateX(-50%);">5140</span>
<span class="t" style="font-size:13px;color:#1773be;font-weight:bold;letter-spacing:0.385px;top:500.02px;left:577.19px;transform:translateX(-50%);">Alle</span>
<span class="t" style="font-size:13px;color:#000;font-weight:bold;top:466.02px;left:673.00px;transform:translateX(-50%);">5140</span>
<span class="t" style="font-size:13px;color:#1773be;font-weight:bold;letter-spacing:0.150px;top:500.02px;left:673.07px;transform:translateX(-50%);">Angebote</span>
<span class="t" style="font-size:13px;color:#fff;font-weight:bold;top:466.02px;left:769.00px;transform:translateX(-50%);">2540</span>
<span class="t" style="font-size:13px;color:#1773be;font-weight:bold;letter-spacing:0.109px;top:500.02px;left:769.05px;transform:translateX(-50%);">Beauftragt</span>
<span class="t" style="font-size:13px;color:#000;font-weight:bold;top:553.02px;left:673.00px;transform:translateX(-50%);">0</span>
<span class="t" style="font-size:13px;color:#1773be;font-weight:bold;letter-spacing:-0.057px;top:587.02px;left:672.97px;transform:translateX(-50%);">Planungen</span>
<span class="t" style="font-size:13px;color:#fff;font-weight:bold;top:553.02px;left:769.00px;transform:translateX(-50%);">2585</span>
<span class="t" style="font-size:13px;color:#1773be;font-weight:bold;letter-spacing:0.190px;top:587.02px;left:769.10px;transform:translateX(-50%);">Nichterteilt</span>
<span class="t" style="font-size:13px;color:#fff;font-weight:bold;top:640.02px;left:769.00px;transform:translateX(-50%);">15</span>
<span class="t" style="font-size:13px;color:#1773be;font-weight:bold;letter-spacing:0.060px;top:674.02px;left:769.03px;transform:translateX(-50%);">Noch Angebot</span>
<span class="t" style="font-size:13px;color:#1773be;font-weight:bold;letter-spacing:-0.039px;top:431.52px;left:817.5px;">Beauftragt 2020</span>
<span class="t" style="font-size:20px;color:#fff;font-weight:bold;letter-spacing:0.747px;top:461.30px;right:58.75px;">12.596.027 €</span>
<span class="t" style="font-size:13px;color:#1773be;font-weight:bold;letter-spacing:0.160px;top:519.52px;left:817.5px;">Nichterteilt 2020</span>
<span class="t" style="font-size:20px;color:#fff;font-weight:bold;letter-spacing:0.747px;top:549.30px;right:58.75px;">12.776.273 €</span>
<span class="t" style="font-size:13px;color:#1773be;font-weight:bold;letter-spacing:-0.154px;top:606.52px;left:817.5px;">Angebotssumme Ende 2020</span>
<span class="t" style="font-size:20px;color:#fff;font-weight:bold;letter-spacing:0.734px;top:636.30px;right:58.77px;">76.151 €</span>
<span class="t" style="font-size:12px;color:#000;letter-spacing:-0.400px;top:735.10px;left:505.5px;transform:scaleX(0.9869);transform-origin:0 0;">MUSTER verbunden mit THF@XE</span>
<span class="t" style="font-size:12px;color:#000;letter-spacing:-0.400px;top:735.10px;left:755.5px;transform:scaleX(0.9781);transform-origin:0 0;">12 Datensätze</span>
</div>
</body></html>
